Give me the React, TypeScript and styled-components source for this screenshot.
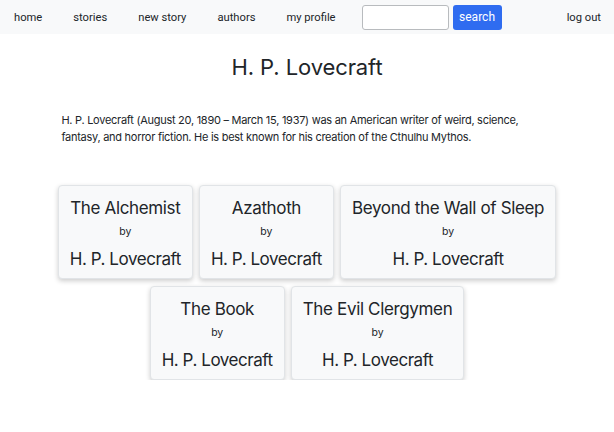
import styled, { createGlobalStyle } from 'styled-components';

const GlobalStyle = createGlobalStyle`
  body {
    margin: 0;
    background: #ffffff;
    color: #212529;
    font-family: Inter, "Liberation Sans", sans-serif;
  }
`;

const NavBar = styled.nav`
  display: flex;
  align-items: center;
  height: 34px;
  padding: 0 13px 0 14px;
  background: #f8f9fa;
  font-family: Roboto, "Liberation Sans", sans-serif;
  font-size: 11.2px;
`;

const NavLinks = styled.div`
  display: flex;
  align-items: center;
  gap: 31px;
`;

const NavLink = styled.a`
  color: #212529;
  text-decoration: none;
`;

const SearchForm = styled.form`
  display: flex;
  align-items: center;
  gap: 4px;
  margin-left: 26px;
`;

const SearchInput = styled.input`
  width: 87px;
  height: 25px;
  box-sizing: border-box;
  border: 1px solid #b8bbbe;
  border-radius: 3px;
  background: #fff;
`;

const SearchButton = styled.button`
  width: 49px;
  height: 25px;
  padding: 0;
  border: none;
  border-radius: 3px;
  background: #2f6cf0;
  color: #fff;
  font-family: Roboto, "Liberation Sans", sans-serif;
  font-size: 12px;
`;

const LogOut = styled(NavLink)`
  margin-left: auto;
`;

const Main = styled.main`
  width: 80%;
  margin: 0 auto;
`;

const Title = styled.h1`
  margin: 18px 0 0;
  text-align: center;
  font-size: 22px;
  font-weight: 400;
  line-height: 30px;
  letter-spacing: -0.1px;
`;

const Bio = styled.p`
  margin: 30px 0 0;
  font-size: 11px;
  line-height: 17px;
  letter-spacing: -0.27px;
`;

const StoryGrid = styled.div`
  display: flex;
  flex-wrap: wrap;
  justify-content: center;
  gap: 7px 6px;
  width: 512px;
  margin: 39px auto 0;
`;

const StoryCard = styled.div`
  padding: 10px 11px 7px;
  background: #f8f9fa;
  border: 1px solid #e1e4e7;
  border-radius: 4px;
  box-shadow: 0 2px 5px rgba(0, 0, 0, 0.2);
  text-align: center;
`;

const StoryTitle = styled.div`
  font-size: 17px;
  line-height: 24px;
  letter-spacing: -0.35px;
`;

const By = styled.div`
  font-size: 10.5px;
  line-height: 24px;
`;

const Author = styled.div`
  margin-top: 3px;
  font-size: 17px;
  line-height: 24px;
  letter-spacing: -0.45px;
`;

const stories = [
  'The Alchemist',
  'Azathoth',
  'Beyond the Wall of Sleep',
  'The Book',
  'The Evil Clergymen',
];

export default function App() {
  return (
    <>
      <GlobalStyle />
      <NavBar>
        <NavLinks>
          <NavLink href="#">home</NavLink>
          <NavLink href="#">stories</NavLink>
          <NavLink href="#">new story</NavLink>
          <NavLink href="#">authors</NavLink>
          <NavLink href="#">my profile</NavLink>
        </NavLinks>
        <SearchForm onSubmit={e => e.preventDefault()}>
          <SearchInput type="text" />
          <SearchButton type="submit">search</SearchButton>
        </SearchForm>
        <LogOut href="#">log out</LogOut>
      </NavBar>
      <Main>
        <Title>H. P. Lovecraft</Title>
        <Bio>
          H. P. Lovecraft (August 20, 1890 – March 15, 1937) was an American writer of weird,
          science, fantasy, and horror fiction. He is best known for his creation of the Cthulhu
          Mythos.
        </Bio>
      </Main>
      <StoryGrid>
        {stories.map(title => (
          <StoryCard key={title}>
            <StoryTitle>{title}</StoryTitle>
            <By>by</By>
            <Author>H. P. Lovecraft</Author>
          </StoryCard>
        ))}
      </StoryGrid>
    </>
  );
}
